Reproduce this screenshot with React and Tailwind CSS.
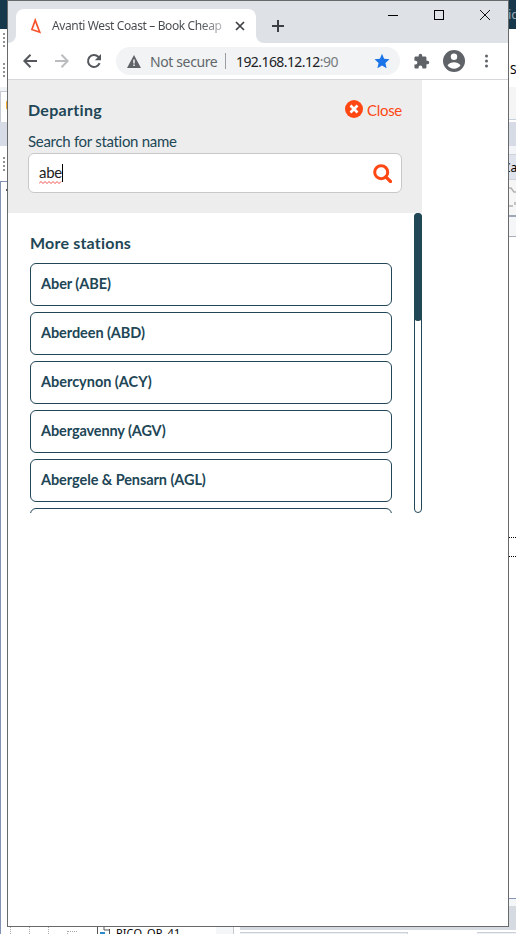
import React from "react";

const stations = [
  ["Aber (ABE)", "tracking-[-0.06px]"],
  ["Aberdeen (ABD)", "tracking-[-0.08px]"],
  ["Abercynon (ACY)", "tracking-[-0.02px]"],
  ["Abergavenny (AGV)", "tracking-[-0.12px]"],
  ["Abergele & Pensarn (AGL)", "tracking-[-0.08px]"],
  ["Aberystwyth (AYW)", "tracking-[-0.08px]"],
];

function Grip() {
  return (
    <div className="flex flex-col gap-[2px] pl-[3px]">
      <i className="size-[2px] bg-[#939393]" />
      <i className="size-[2px] bg-[#939393]" />
      <i className="size-[2px] bg-[#939393]" />
      <i className="size-[2px] bg-[#939393]" />
    </div>
  );
}

function BackgroundApp() {
  return (
    <div className="flex h-full flex-col">
      <div className="flex h-[927px] justify-between">
        <div className="flex w-[8px] flex-col overflow-hidden">
          <div className="h-[29px] shrink-0 bg-[#17374b]" />
          <div className="flex h-[58px] shrink-0 flex-col gap-[16px] pt-[4px]">
            <Grip />
            <Grip />
          </div>
          <div className="h-[4px] shrink-0 bg-[#f1f2f5]" />
          <div className="h-[31px] shrink-0 border-l border-t border-[#c5cad3] pl-[5px] pt-[9px]">
            <div className="h-[8px] w-[2px] bg-[#f2b136]" />
          </div>
          <div className="h-[24px] shrink-0 bg-[#d6dbe5]" />
          <div className="h-[35px] shrink-0 pt-[11px]">
            <Grip />
          </div>
          <div className="grow border-l border-t border-[#8292b3] pl-[5px] pt-[7px]">
            <div className="h-[2px] w-[3px] bg-[#555]" />
          </div>
        </div>
        <div className="flex w-[8px] flex-col overflow-hidden whitespace-nowrap font-['Noto_Sans',sans-serif] text-[12px] text-black">
          <div className="h-[29px] shrink-0 bg-[#17374b] pt-[6px] text-[13px] leading-[17px] text-[#9aa9b4]">id</div>
          <div className="h-[58px] shrink-0 pl-[2px] pt-[32px] leading-[18px]">S</div>
          <div className="h-[32px] shrink-0 bg-[#f5f5f6]" />
          <div className="h-[3px] shrink-0 border-t border-[#c8d0da]" />
          <div className="h-[24px] shrink-0 bg-[#d6dbe5]" />
          <div className="h-[8px] shrink-0 bg-[#f3f4f7]" />
          <div className="h-[26px] shrink-0 border-y border-[#ccd3dc] bg-[#dfe4ec] pt-[4px] leading-[18px]">
            <span className="-ml-[5px]">Ca</span>
          </div>
          <div className="h-[35px] shrink-0 bg-[#f6f6f6]">
            <svg className="block" width="8" height="35" fill="none" stroke="#b2b2b2">
              <path d="M0 8h3l3 4h2M0 26h5M7 22v3" strokeWidth="1.5" />
            </svg>
          </div>
          <div className="h-[22px] shrink-0 border-b border-t-2 border-b-[#a9adb5] border-t-[#a0a7b5] bg-[#f5f6f8]" />
          <div className="h-[300px] shrink-0" />
          <div className="h-[19px] shrink-0 border-t border-dotted border-black" />
          <div className="h-[342px] shrink-0 border-t border-dotted border-black" />
          <div className="h-[8px] shrink-0 border-t border-[#8594b4] bg-[#f5f6f8]" />
          <div className="grow bg-[#d6dbe2]" />
        </div>
      </div>
      <div className="flex h-[7px] overflow-hidden">
        <div className="flex w-[97px] gap-[18px] border-l border-[#8292b3] pl-[9px]">
          <i className="w-[1px] border-l border-dotted border-[#aaa]" />
          <i className="w-[1px] border-l border-dotted border-[#aaa]" />
          <i className="flex w-[1px] border-l border-dotted border-[#aaa]" />
          <i className="mt-[4px] h-[3px] w-[10px] border-l border-t border-dotted border-[#aaa]" />
        </div>
        <svg className="block shrink-0" width="13" height="7" fill="none">
          <path d="M.5 0v7M12.500 2v5M7 0v3h5" stroke="#555" />
          <path d="M3 6h5" stroke="#2b8acb" strokeWidth="2" />
        </svg>
        <div className="w-[106px] shrink-0 whitespace-nowrap pl-[6px] font-['Noto_Sans',sans-serif] text-[11px] leading-[12px] tracking-[0.1px] text-black">PICO_OP_41</div>
        <div className="w-[18px] shrink-0 border-r border-[#c4c8cf] bg-[#f5f6f8]" />
        <div className="flex grow flex-col pl-[6px]">
          <div className="h-[3px] shrink-0 bg-[#d6dbe2]" />
          <div className="flex justify-between pt-[2px]">
            <div className="h-[2px] w-[168px] border-r border-t border-[#ccd1d8] bg-[#eceff3]" />
            <div className="h-[2px] w-[39px] border-t border-[#ccd1d8] bg-[#eceff3]" />
          </div>
        </div>
      </div>
    </div>
  );
}

function TabStrip() {
  return (
    <div className="flex h-[42px] bg-[#dee1e6] font-['Noto_Sans',sans-serif]">
      <svg className="mt-[34px] block shrink-0" width="8" height="8">
        <path d="M8 0v8H0A8 8 0 0 0 8 0Z" fill="#fff" />
      </svg>
      <div className="mt-[8px] flex h-[34px] w-[240px] items-center rounded-t-[8px] bg-white">
        <svg className="ml-[14px] block shrink-0" width="12" height="16" viewBox="0 0 12 16" fill="none">
          <path d="M5.200 2.200 1.900 11.500 9.700 14.200Z" stroke="#f9532b" strokeWidth="1.700" />
        </svg>
        <div className="ml-[10px] w-[173px] overflow-hidden whitespace-nowrap bg-linear-to-r from-[#45494d] from-85% to-[#c9cacc] bg-clip-text text-[12px] leading-[18px] tracking-[-0.38px] text-transparent">
          Avanti West Coast – Book Cheap
        </div>
        <svg className="ml-[10px] block" width="10" height="10" stroke="#3c4043" strokeWidth="1.700">
          <path d="M1 1l8 8M9 1l-8 8" />
        </svg>
      </div>
      <svg className="mt-[34px] block shrink-0" width="8" height="8">
        <path d="M0 0v8h8A8 8 0 0 1 0 0Z" fill="#fff" />
      </svg>
      <svg className="ml-[8px] mt-[19px] block shrink-0" width="12" height="12" stroke="#3c4043" strokeWidth="2">
        <path d="M6 0v12M0 6h12" />
      </svg>
      <div className="ml-[104px] flex gap-[36px] pt-[9px]">
        <svg className="block" width="10" height="10" stroke="#000">
          <path d="M0 5.500h10" />
        </svg>
        <svg className="block" width="10" height="10" stroke="#000" fill="none">
          <rect x=".5" y=".5" width="9" height="9" />
        </svg>
        <svg className="block" width="10" height="10" stroke="#111">
          <path d="M0 0l10 10M10 0L0 10" />
        </svg>
      </div>
    </div>
  );
}

function Toolbar() {
  return (
    <div className="flex h-[37px] items-center border-b border-[#d5d7da] bg-white font-['Noto_Sans',sans-serif] text-[14px]">
      <svg className="ml-[15px] block shrink-0" width="14" height="14" fill="none" stroke="#54585d" strokeWidth="2">
        <path d="M14 7H1.500M7.500.8 1.300 7l6.200 6.200" />
      </svg>
      <svg className="ml-[18px] block shrink-0" width="14" height="14" fill="none" stroke="#babcbe" strokeWidth="2">
        <path d="M0 7h12.500M6.500.8 12.700 7l-6.200 6.200" />
      </svg>
      <svg className="ml-[16px] block shrink-0" width="18" height="18" viewBox="0 0 18 18" fill="none">
        <path d="M14.600 11.200A6 6 0 1 1 13.300 4.800L14.500 6" stroke="#54585d" strokeWidth="2" />
        <path d="M16 2v6.200H9.800Z" fill="#54585d" />
      </svg>
      <div className="ml-[13px] flex h-[28px] w-[284px] items-center rounded-full bg-[#f1f3f4]">
        <svg className="ml-[11px] block shrink-0" width="14" height="13">
          <path d="M7 0l7 13H0Z" fill="#5f6368" />
          <path d="M7 4.500v4M7 9.500v1.500" stroke="#fff" strokeWidth="1.400" />
        </svg>
        <span className="ml-[9px] w-[75px] whitespace-nowrap tracking-[-0.38px] text-[#62666a]">Not secure</span>
        <i className="h-[16px] w-px bg-[#9a9da1]" />
        <span className="ml-[10px] w-[138px] whitespace-nowrap tracking-[-0.58px] text-[#202124]">
          192.168.12.12<span className="text-[#777b7f]">:90</span>
        </span>
        <svg className="block shrink-0" width="16" height="16" viewBox="0 0 16 16">
          <path d="M8 .8l2.100 5 5.400.5-4.100 3.600 1.200 5.300L8 12.400l-4.600 2.800 1.200-5.300L.5 6.300l5.400-.5Z" fill="#1a73e8" />
        </svg>
      </div>
      <svg className="ml-[13px] block shrink-0" width="17" height="17" viewBox="0 0 24 24" fill="#5f6368">
        <path d="M20.500 11H19V7c0-1.100-.9-2-2-2h-4V3.500a2.500 2.500 0 0 0-5 0V5H4c-1.100 0-2 .9-2 2v3.800h1.500a2.700 2.700 0 0 1 0 5.400H2V20c0 1.100.9 2 2 2h3.800v-1.500a2.700 2.700 0 0 1 5.400 0V22H17c1.100 0 2-.9 2-2v-4h1.500a2.500 2.500 0 0 0 0-5Z" />
      </svg>
      <svg className="ml-[13px] block shrink-0" width="22" height="22" viewBox="0 0 22 22">
        <circle cx="11" cy="11" r="11" fill="#5f6368" />
        <circle cx="11" cy="6.700" r="3.200" fill="#fff" />
        <path d="M4.500 15.300c1.300-2 4.200-3 6.500-3s5.200 1 6.500 3a7.800 7.800 0 0 1-13 0Z" fill="#fff" />
      </svg>
      <svg className="ml-[19px] block shrink-0" width="4" height="14" fill="#5f6368">
        <circle cx="2.500" cy="2" r="1.500" />
        <circle cx="2.500" cy="7" r="1.500" />
        <circle cx="2.500" cy="12" r="1.500" />
      </svg>
    </div>
  );
}

function StationPicker() {
  return (
    <div className="w-[414px] font-['Lato',sans-serif] text-[#214656]">
      <div className="h-[133px] bg-[#ededed] px-[20px] pt-[18px]">
        <div className="flex h-[24px] items-center justify-between">
          <h1 className="whitespace-nowrap text-[16px] font-bold tracking-[0.3px]">Departing</h1>
          <div className="flex items-center text-[#ff4713]">
            <svg className="mb-[3px] block" width="18" height="18">
              <circle cx="9" cy="9" r="9" fill="#ff4713" />
              <path d="M5.500 5.500l7 7M12.500 5.500l-7 7" stroke="#fff" strokeWidth="2.600" />
            </svg>
            <span className="ml-[4px] w-[35px] whitespace-nowrap text-[15px] tracking-[-0.3px]">Close</span>
          </div>
        </div>
        <div className="mt-[9px] h-[22px] whitespace-nowrap text-[15px] leading-[21px] tracking-[-0.3px]">Search for station name</div>
        <div className="flex h-[40px] items-center justify-between rounded-[6px] border border-[#c8c8c8] bg-white pl-[10px] pr-[9px]">
          <div className="flex items-center text-[#222]">
            <span className="flex w-[23px] flex-col">
              <span className="h-[18px] text-[15px] leading-[19px] tracking-[-0.3px]">abe</span>
              <svg className="block" width="23" height="3" fill="none">
                <path d="M0 2.500l2-2 2 2 2-2 2 2 2-2 2 2 2-2 2 2 2-2 2 2 2-2" stroke="#f04040" strokeWidth=".9" />
              </svg>
            </span>
            <i className="h-[18px] w-px bg-black" />
          </div>
          <svg className="block" width="19" height="19" fill="none" stroke="#ff4713">
            <circle cx="8.200" cy="8.200" r="6.500" strokeWidth="3" />
            <path d="M12.800 12.800l4.700 4.700" strokeWidth="3.200" strokeLinecap="round" />
          </svg>
        </div>
      </div>
      <div className="flex h-[300px] justify-between overflow-hidden pl-[22px]">
        <div className="w-[362px]">
          <h2 className="h-[50px] pt-[19px] text-[16px] font-bold leading-[22px] tracking-[0.2px]">More stations</h2>
          <ul className="flex flex-col gap-[6px]">
            {stations.map(([name, tracking]) => (
              <li key={name} className={"h-[43px] rounded-[6px] border border-[#214656] pl-[10px] text-[14.5px] font-bold leading-[40px] " + tracking}>
                {name}
              </li>
            ))}
          </ul>
        </div>
        <div className="h-[300px] w-[8px] rounded-full border border-[#214656]">
          <div className="-mx-px -mt-px h-[108px] rounded-full bg-[#214656]" />
        </div>
      </div>
    </div>
  );
}

export default function App() {
  return (
    <div className="relative h-[934px] w-[516px] overflow-hidden bg-white">
      <BackgroundApp />
      <div className="absolute left-[7px] top-0 flex h-[927px] w-[502px] flex-col border border-[#68696b] bg-white">
        <TabStrip />
        <Toolbar />
        <StationPicker />
      </div>
    </div>
  );
}
